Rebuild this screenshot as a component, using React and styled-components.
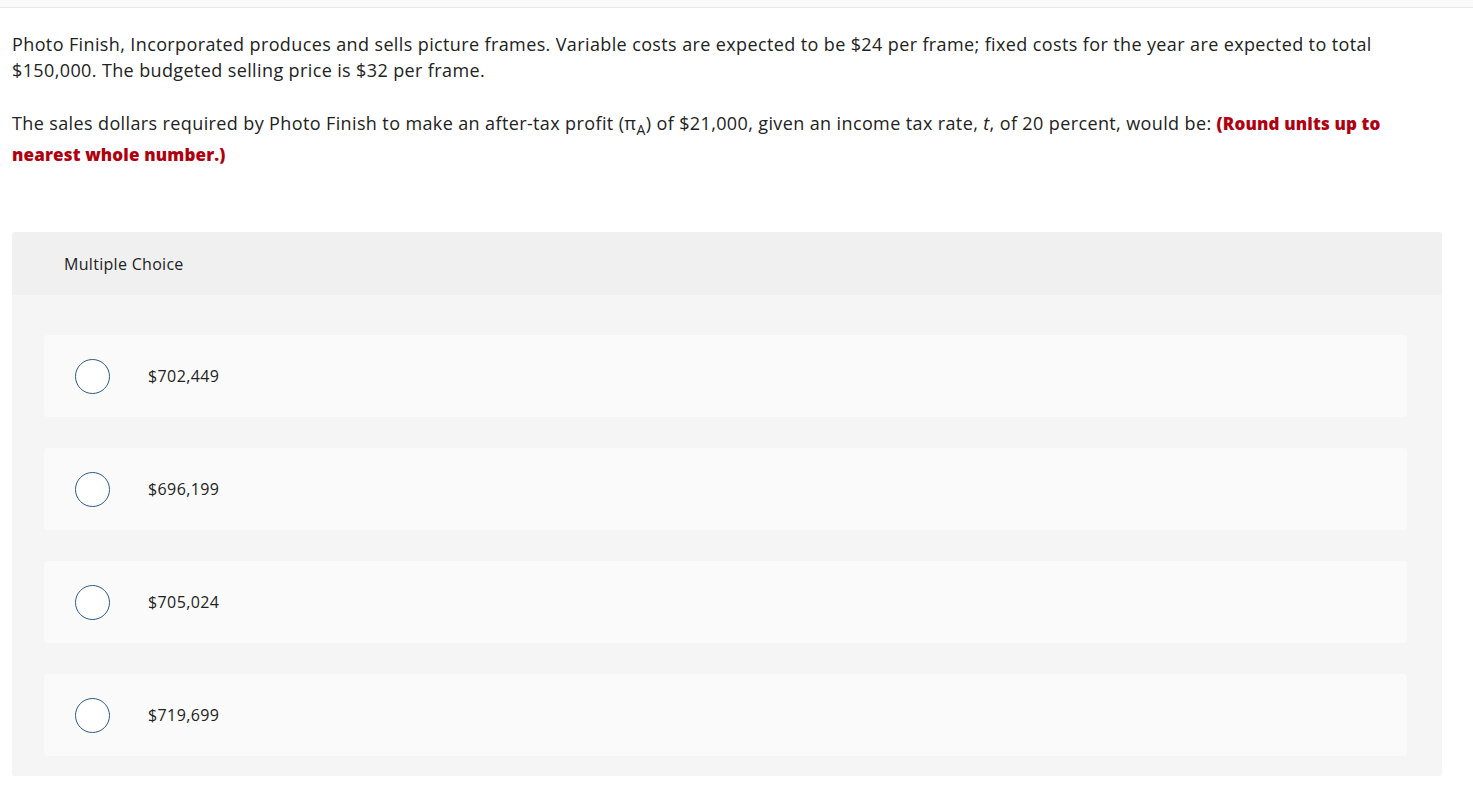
import React from 'react';
import styled, { createGlobalStyle } from 'styled-components';

const GlobalStyle = createGlobalStyle`
  body {
    margin: 0;
    background: #ffffff;
    font-family: "Open Sans", Lato, sans-serif;
    color: #1a1a1a;
  }
`;

const TopBar = styled.div`
  height: 7px;
  background: #fafafa;
  border-bottom: 1px solid #e8e8e8;
`;

const Page = styled.div`
  padding: 23px 31px 8px 12px;
`;

const Prompt = styled.p`
  margin: 0 0 25px 0;
  font-size: 18px;
  letter-spacing: 0.38px;
  line-height: 26px;
  color: #222;
`;

const Question = styled.p`
  margin: 0;
  font-size: 18px;
  letter-spacing: 0.38px;
  line-height: 31px;
  color: #222;
`;

const Hint = styled.strong`
  color: #b0000f;
  font-weight: 800;
  font-size: 17px;
  letter-spacing: 0.15px;
`;

const Sub = styled.sub`
  font-size: 14px;
  vertical-align: sub;
  line-height: 1;
`;

const Panel = styled.section`
  margin-top: 62px;
  background: #f5f5f5;
  border-radius: 3px;
  padding-bottom: 20px;
`;

const PanelHeader = styled.div`
  height: 63px;
  display: flex;
  align-items: center;
  padding-left: 52px;
  background: #f0f0f0;
  border-radius: 3px 3px 0 0;
  font-size: 16px;
  letter-spacing: 0.3px;
  color: #222;
`;

const Options = styled.div`
  display: flex;
  flex-direction: column;
  gap: 31px;
  padding: 40px 35px 0 32px;
`;

const Option = styled.label`
  display: flex;
  align-items: center;
  height: 82px;
  background: #fafafa;
  border-radius: 4px;
  padding-left: 31px;
  font-size: 16px;
  letter-spacing: 0.4px;
  color: #222;
  cursor: pointer;
`;

const Radio = styled.span`
  width: 33px;
  height: 33px;
  border: 1.5px solid #2a5b8c;
  border-radius: 50%;
  background: #fff;
  flex-shrink: 0;
  margin-right: 38px;
`;

const choices = ['$702,449', '$696,199', '$705,024', '$719,699'];

export default function App() {
  return (
    <>
      <GlobalStyle />
      <TopBar />
      <Page>
        <Prompt>
          Photo Finish, Incorporated produces and sells picture frames. Variable costs are expected to be $24 per frame; fixed costs for the year are expected to total $150,000. The budgeted selling price is $32 per frame.
        </Prompt>
        <Question>
          The sales dollars required by Photo Finish to make an after-tax profit (π<Sub>A</Sub>) of $21,000, given an income tax rate, <i>t</i>, of 20 percent, would be: <Hint>(Round units up to nearest whole number.)</Hint>
        </Question>
        <Panel>
          <PanelHeader>Multiple Choice</PanelHeader>
          <Options>
            {choices.map((c) => (
              <Option key={c}>
                <Radio />
                {c}
              </Option>
            ))}
          </Options>
        </Panel>
      </Page>
    </>
  );
}
